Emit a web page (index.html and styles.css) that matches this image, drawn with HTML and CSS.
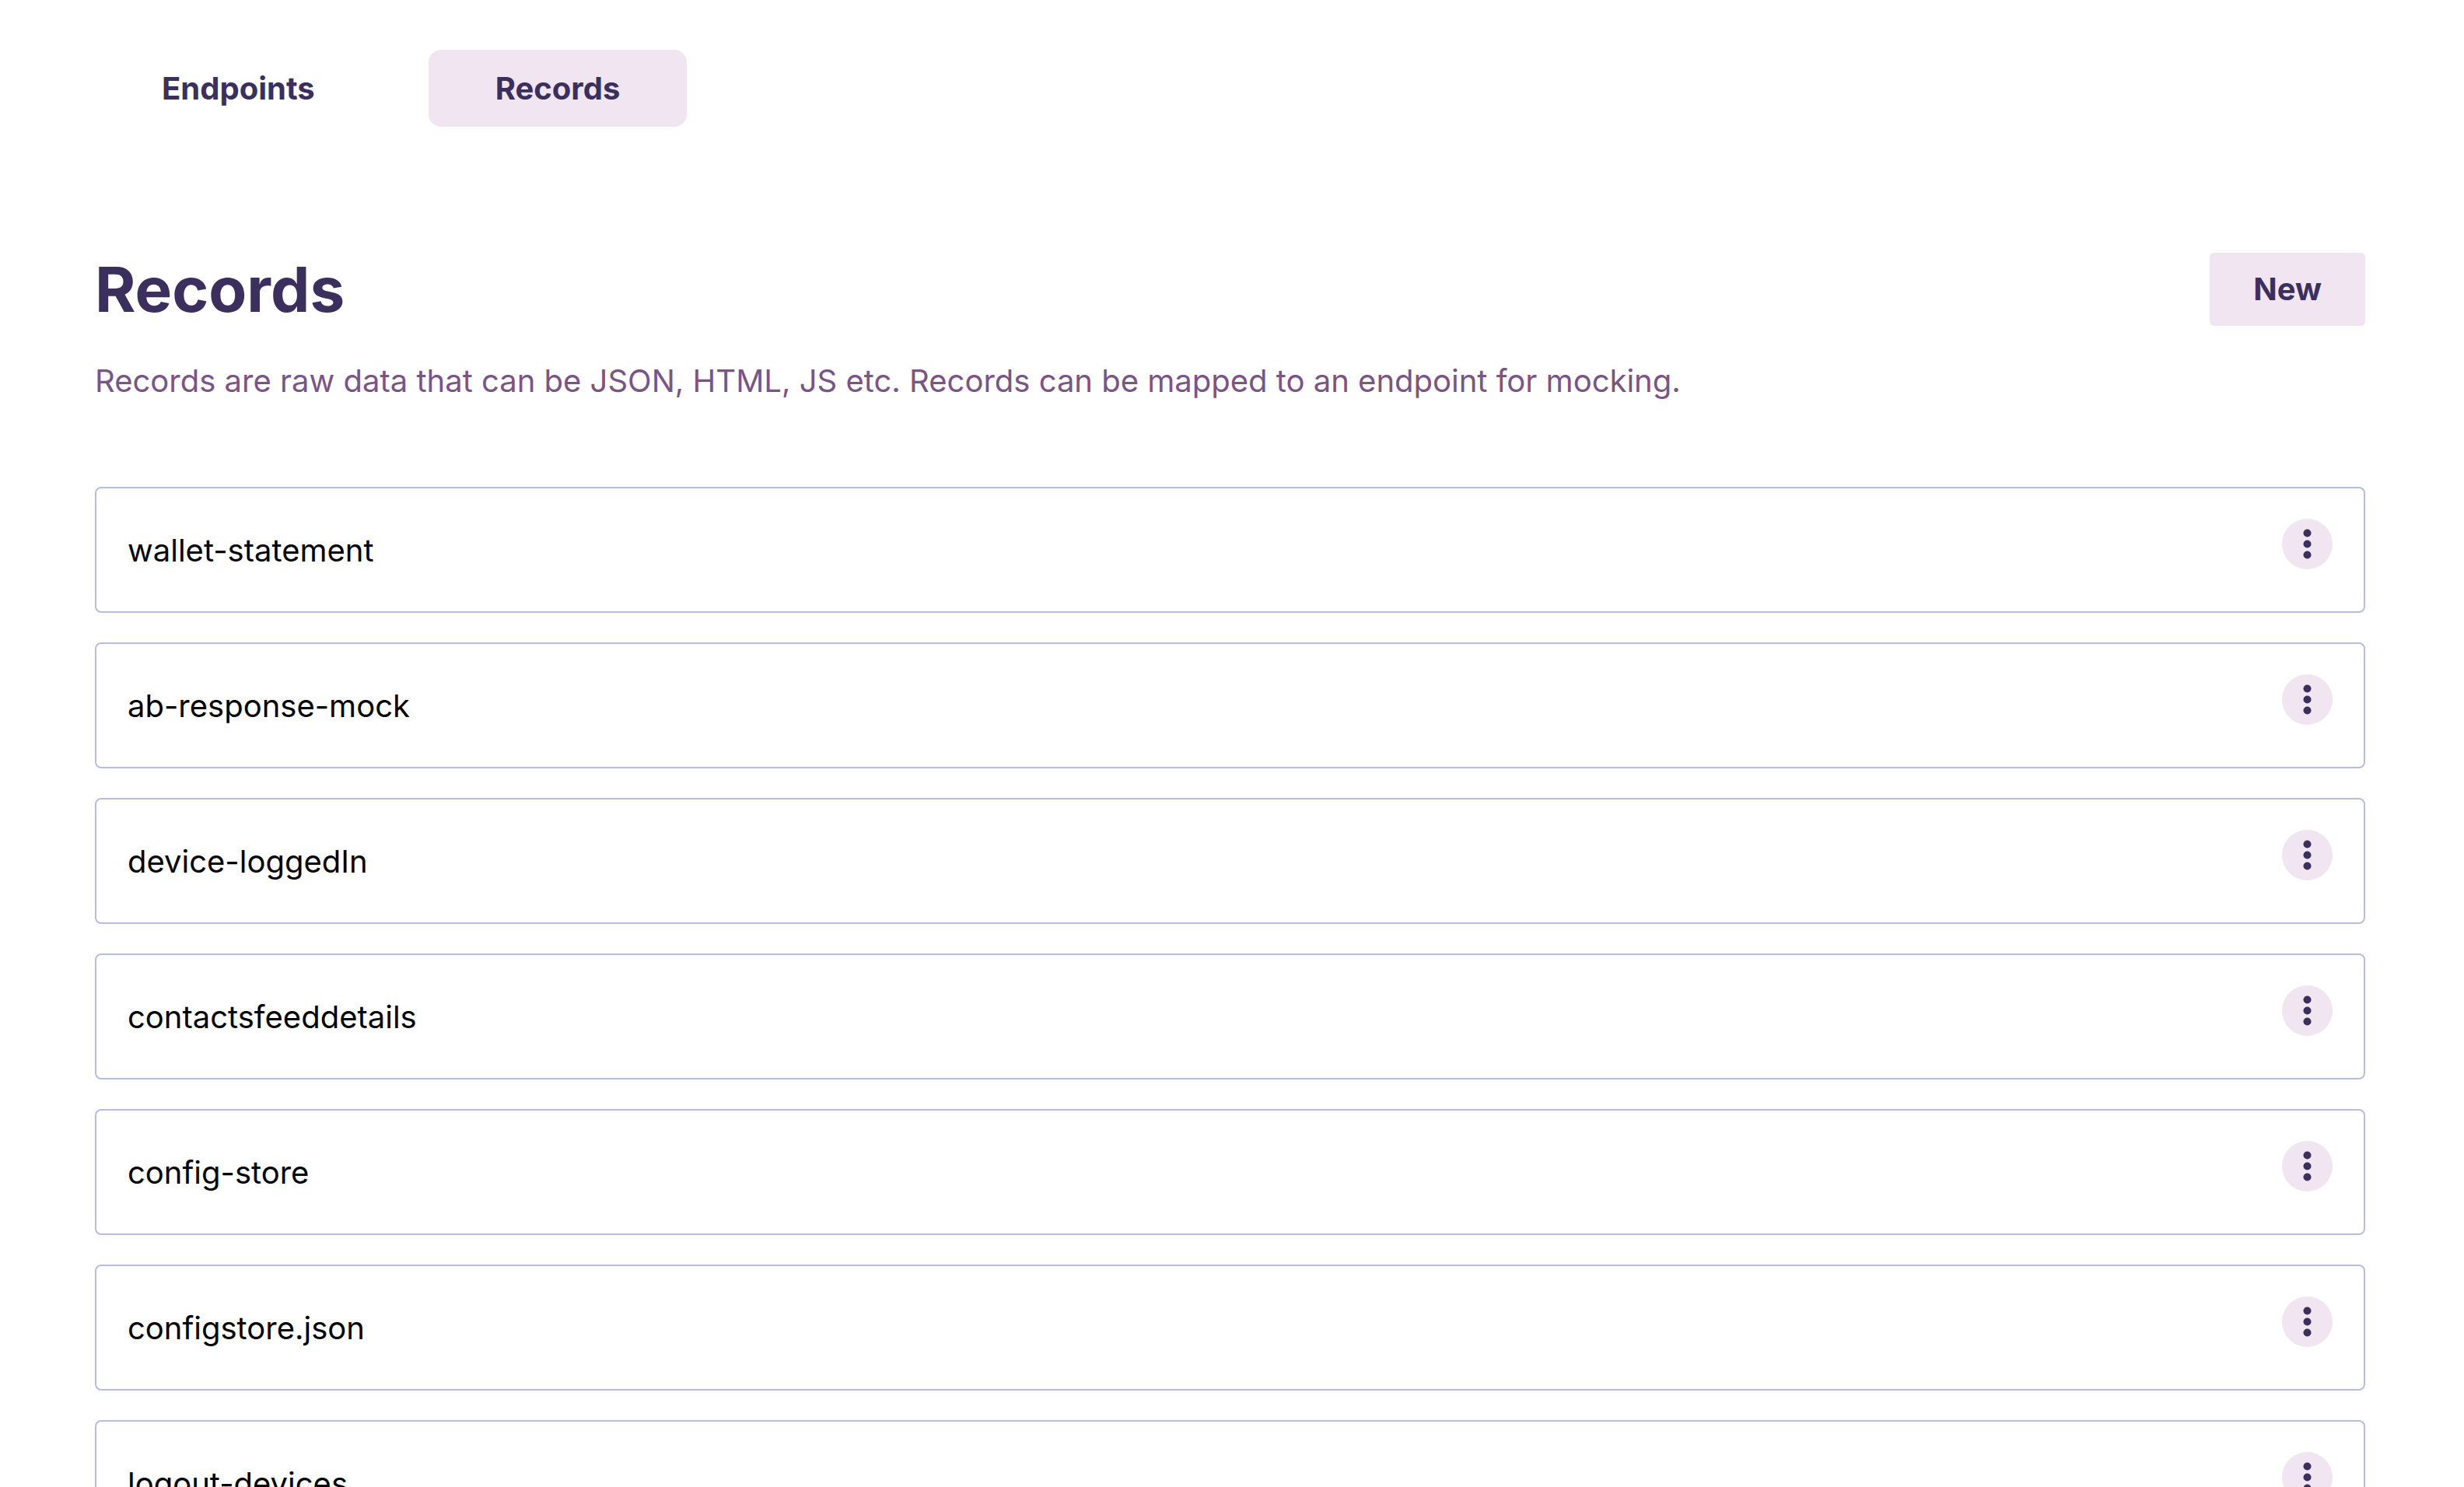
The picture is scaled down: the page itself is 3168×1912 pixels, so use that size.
FILE: index.html
```html
<!DOCTYPE html>
<html lang="en">
<head>
  <meta charset="UTF-8" />
  <meta name="viewport" content="width=device-width, initial-scale=1.0"/>
  <title>Records</title>
  <link rel="stylesheet" href="styles.css">
</head>
<body>
  <div class="page">
    <nav class="tabs">
      <a class="tab" href="#">Endpoints</a>
      <a class="tab active" href="#">Records</a>
    </nav>

    <main>
      <div class="page-head">
        <h1>Records</h1>
        <button class="new-btn">New</button>
      </div>
      <p class="page-desc">Records are raw data that can be JSON, HTML, JS etc. Records can be mapped to an endpoint for mocking.</p>

      <ul class="records">
        <li class="record">
          <span class="record-name">wallet-statement</span>
          <button class="more-btn" title="More">
            <svg viewBox="0 0 65 65"><circle cx="32.5" cy="18.5" r="5"/><circle cx="32.5" cy="32.5" r="5"/><circle cx="32.5" cy="46.5" r="5"/></svg>
          </button>
        </li>
        <li class="record">
          <span class="record-name">ab-response-mock</span>
          <button class="more-btn" title="More">
            <svg viewBox="0 0 65 65"><circle cx="32.5" cy="18.5" r="5"/><circle cx="32.5" cy="32.5" r="5"/><circle cx="32.5" cy="46.5" r="5"/></svg>
          </button>
        </li>
        <li class="record">
          <span class="record-name">device-loggedIn</span>
          <button class="more-btn" title="More">
            <svg viewBox="0 0 65 65"><circle cx="32.5" cy="18.5" r="5"/><circle cx="32.5" cy="32.5" r="5"/><circle cx="32.5" cy="46.5" r="5"/></svg>
          </button>
        </li>
        <li class="record">
          <span class="record-name">contactsfeeddetails</span>
          <button class="more-btn" title="More">
            <svg viewBox="0 0 65 65"><circle cx="32.5" cy="18.5" r="5"/><circle cx="32.5" cy="32.5" r="5"/><circle cx="32.5" cy="46.5" r="5"/></svg>
          </button>
        </li>
        <li class="record">
          <span class="record-name">config-store</span>
          <button class="more-btn" title="More">
            <svg viewBox="0 0 65 65"><circle cx="32.5" cy="18.5" r="5"/><circle cx="32.5" cy="32.5" r="5"/><circle cx="32.5" cy="46.5" r="5"/></svg>
          </button>
        </li>
        <li class="record">
          <span class="record-name">configstore.json</span>
          <button class="more-btn" title="More">
            <svg viewBox="0 0 65 65"><circle cx="32.5" cy="18.5" r="5"/><circle cx="32.5" cy="32.5" r="5"/><circle cx="32.5" cy="46.5" r="5"/></svg>
          </button>
        </li>
        <li class="record">
          <span class="record-name">logout-devices</span>
          <button class="more-btn" title="More">
            <svg viewBox="0 0 65 65"><circle cx="32.5" cy="18.5" r="5"/><circle cx="32.5" cy="32.5" r="5"/><circle cx="32.5" cy="46.5" r="5"/></svg>
          </button>
        </li>
      </ul>
    </main>
  </div>
</body>
</html>
```

FILE: styles.css
```css
:root {
  --ink: #3a2f5d;
  --soft: #f0e5f0;
  --muted: #7a5485;
  --line: #b6bee0;
}
* {
  margin: 0;
  padding: 0;
  box-sizing: border-box;
}
body {
  font-family: Inter, 'Noto Sans', sans-serif;
  background: #fff;
  color: #000;
}
.page {
  padding: 64px 127px 0 122px;
}
.tabs {
  display: flex;
  gap: 60px;
}
.tab {
  display: block;
  padding: 25px 86px;
  line-height: 49px;
  font-size: 40px;
  font-weight: 700;
  color: var(--ink);
  text-decoration: none;
  border-radius: 16px;
}
.tab.active {
  background: var(--soft);
}
.page-head {
  margin-top: 161px;
  display: flex;
  justify-content: space-between;
  align-items: center;
}
.page-head h1 {
  font-size: 80px;
  line-height: 96px;
  font-weight: 700;
  color: var(--ink);
}
.new-btn {
  font-family: inherit;
  font-size: 40px;
  font-weight: 700;
  line-height: 48px;
  color: var(--ink);
  background: var(--soft);
  border: none;
  border-radius: 6px;
  padding: 23px 56px;
  cursor: pointer;
}
.page-desc {
  margin-top: 40px;
  font-size: 40px;
  line-height: 60px;
  color: var(--muted);
}
.records {
  list-style: none;
  margin-top: 106px;
  display: flex;
  flex-direction: column;
  gap: 38px;
}
.record {
  display: flex;
  justify-content: space-between;
  align-items: flex-start;
  padding: 40px 40px 38px;
  border: 2px solid var(--line);
  border-radius: 8px;
}
.record-name {
  font-size: 40px;
  line-height: 80px;
}
.more-btn {
  width: 65px;
  height: 65px;
  margin-top: -1px;
  border: none;
  border-radius: 50%;
  background: var(--soft);
  cursor: pointer;
  display: flex;
}
.more-btn svg {
  width: 65px;
  height: 65px;
  fill: var(--ink);
}
```
